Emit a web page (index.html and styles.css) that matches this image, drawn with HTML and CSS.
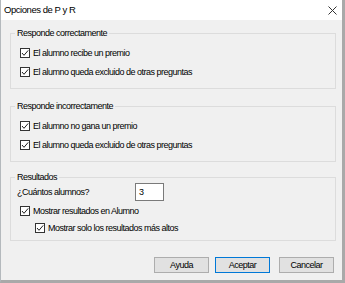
FILE: index.html
```html
<html>
  <head>
    <link rel="stylesheet" href="styles.css">
  </head>
  <body>
    <div class="window">
      <div class="titlebar">
        <span class="title">Opciones de P y R</span>
        <svg class="close" width="9" height="9" viewBox="0 0 9 9">
          <path d="M0.5 0.5 L8.5 8.5 M8.5 0.5 L0.5 8.5" stroke="#333" stroke-width="1" fill="none"/>
        </svg>
      </div>
      <div class="content">
        <fieldset class="group g1">
          <legend>Responde correctamente</legend>
          <div class="row"><svg class="cb" width="10" height="10" viewBox="0 0 10 10"><rect x="0.5" y="0.5" width="9" height="9" fill="#fff" stroke="#333"/><path d="M2 5 L4 7.3 L8.2 2.4" stroke="#222" fill="none"/></svg>El alumno recibe un premio</div>
          <div class="row"><svg class="cb" width="10" height="10" viewBox="0 0 10 10"><rect x="0.5" y="0.5" width="9" height="9" fill="#fff" stroke="#333"/><path d="M2 5 L4 7.3 L8.2 2.4" stroke="#222" fill="none"/></svg>El alumno queda excluido de otras preguntas</div>
        </fieldset>
        <fieldset class="group g2">
          <legend>Responde incorrectamente</legend>
          <div class="row"><svg class="cb" width="10" height="10" viewBox="0 0 10 10"><rect x="0.5" y="0.5" width="9" height="9" fill="#fff" stroke="#333"/><path d="M2 5 L4 7.3 L8.2 2.4" stroke="#222" fill="none"/></svg>El alumno no gana un premio</div>
          <div class="row"><svg class="cb" width="10" height="10" viewBox="0 0 10 10"><rect x="0.5" y="0.5" width="9" height="9" fill="#fff" stroke="#333"/><path d="M2 5 L4 7.3 L8.2 2.4" stroke="#222" fill="none"/></svg>El alumno queda excluido de otras preguntas</div>
        </fieldset>
        <fieldset class="group g3">
          <legend>Resultados</legend>
          <div class="count">
            <span class="count-label">¿Cuántos alumnos?</span>
            <span class="field">3</span>
          </div>
          <div class="row"><svg class="cb" width="10" height="10" viewBox="0 0 10 10"><rect x="0.5" y="0.5" width="9" height="9" fill="#fff" stroke="#333"/><path d="M2 5 L4 7.3 L8.2 2.4" stroke="#222" fill="none"/></svg>Mostrar resultados en Alumno</div>
          <div class="row sub"><svg class="cb" width="10" height="10" viewBox="0 0 10 10"><rect x="0.5" y="0.5" width="9" height="9" fill="#fff" stroke="#333"/><path d="M2 5 L4 7.3 L8.2 2.4" stroke="#222" fill="none"/></svg>Mostrar solo los resultados más altos</div>
        </fieldset>
        <div class="actions">
          <button class="btn help">Ayuda</button>
          <button class="btn primary">Aceptar</button>
          <button class="btn">Cancelar</button>
        </div>
      </div>
    </div>
  </body>
</html>
```
FILE: styles.css
```css
body {
    margin: 0;
    font-family: "Liberation Sans", Arial, sans-serif;
    font-size: 9px;
    letter-spacing: -0.5px;
    color: #000;
}

.window {
    width: 345px;
    height: 283px;
    box-sizing: border-box;
    background-color: #f0f0f0;
    border-left: 1px solid #b4b9bd;
    border-right: 3px solid #a9a9a9;
    border-bottom: 3px solid #a9a9a9;
    display: flex;
    flex-direction: column;
}

.titlebar {
    height: 20px;
    background-color: #fff;
    display: flex;
    align-items: center;
    justify-content: space-between;
    padding: 0 5px 0 3px;
}

.title {
    font-size: 9.5px;
    letter-spacing: -0.45px;
    line-height: 12px;
}

.close {
    display: block;
}

.content {
    flex: 1;
    padding: 7px 6px 0 9px;
}

.group {
    margin: 0;
    padding: 4px 0 7px 0;
    border: 1px solid #dcdcdc;
    min-width: 0;
}

.group legend {
    margin-left: 4px;
    padding: 0 2px;
    line-height: 12px;
}

.g2 {
    margin-top: 11px;
}

.g3 {
    margin-top: 9px;
    padding: 0 0 4px 0;
}

.row {
    display: flex;
    align-items: center;
    height: 19px;
    padding-left: 9px;
}

.row.sub {
    height: 16px;
    padding-left: 24px;
}

.cb {
    display: block;
    flex: none;
    margin-right: 3px;
}

.count {
    display: flex;
    align-items: center;
    height: 18px;
    padding-left: 6px;
}

.count-label {
    width: 118px;
}

.field {
    width: 29px;
    height: 18px;
    box-sizing: border-box;
    border: 1px solid #7a7a7a;
    background-color: #fff;
    padding-left: 3px;
    display: flex;
    align-items: center;
}

.actions {
    display: flex;
    justify-content: flex-end;
    margin-top: 16px;
    padding-right: 2px;
}

.btn {
    width: 55px;
    height: 16px;
    box-sizing: border-box;
    padding: 0;
    margin: 0;
    border: 1px solid #adadad;
    background-color: #e1e1e1;
    font-family: inherit;
    font-size: 9px;
    letter-spacing: -0.5px;
    color: #000;
}

.help {
    margin-right: 6px;
}

.primary {
    border-color: #0078d7;
    margin-right: 9px;
}
```
